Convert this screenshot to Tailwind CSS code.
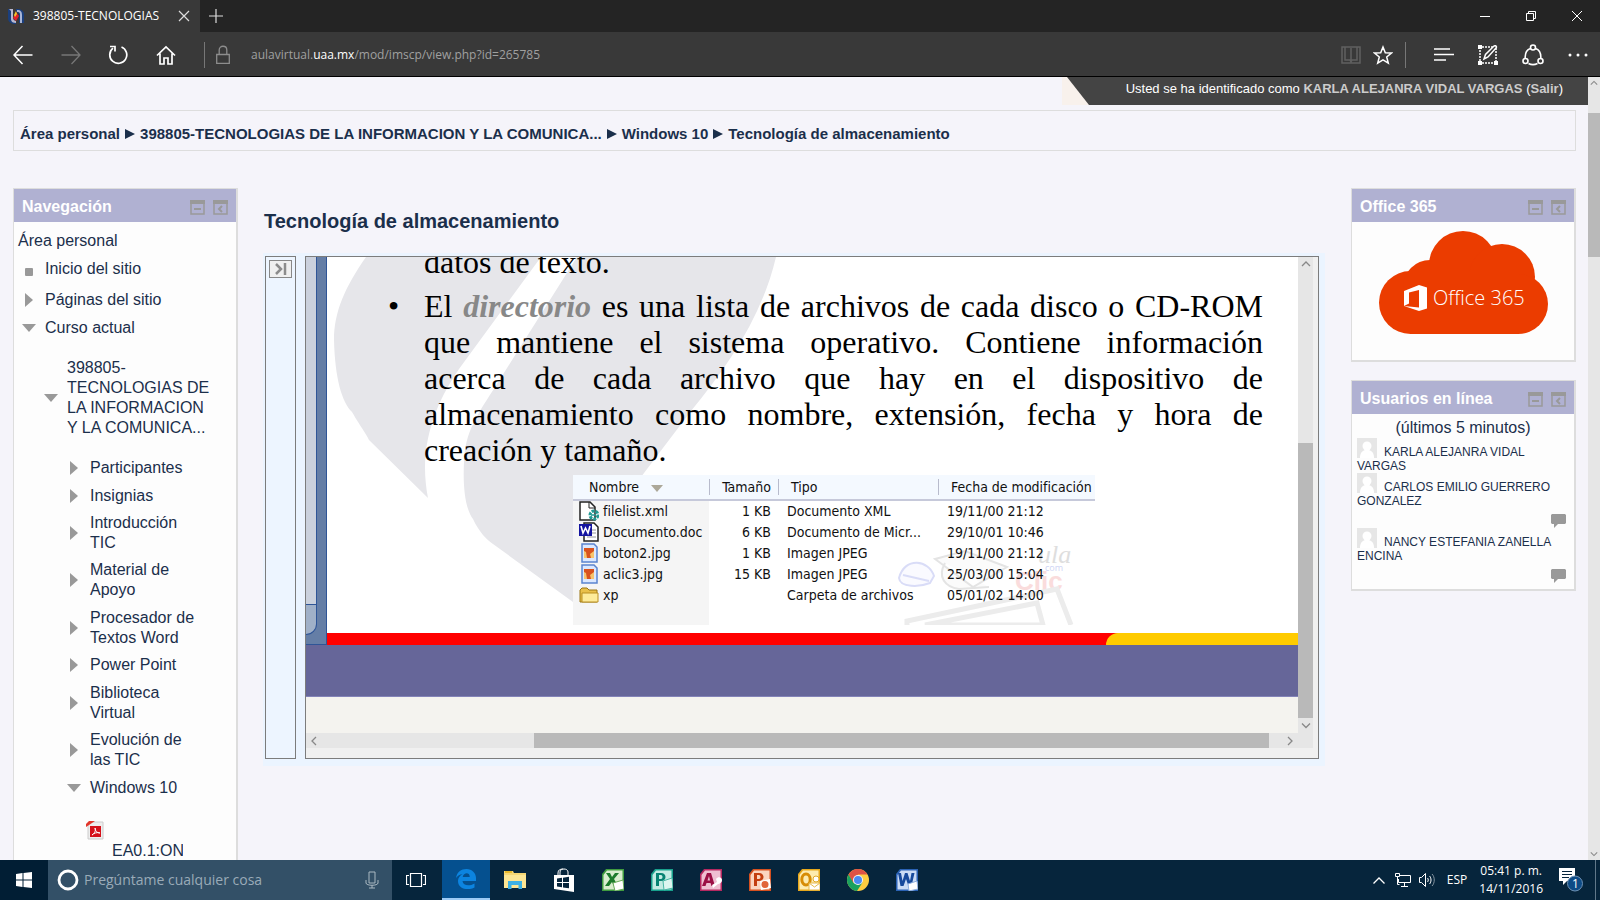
<!DOCTYPE html>
<html lang="es">
<head>
  <meta charset="UTF-8" />
  <meta name="viewport" content="width=device-width, initial-scale=1.0"/>
  <title>398805-TECNOLOGIAS</title>
  <script src="https://cdn.jsdelivr.net/npm/@tailwindcss/browser@4"></script>
</head>
<body class="h-screen flex flex-col overflow-hidden bg-[#f5f4fa] font-['Liberation_Sans',sans-serif] text-base leading-5 text-[#1b2f4b]">

  <!-- Shared icons -->
  <svg class="hidden">
    <symbol id="minus" viewBox="0 0 15 15"><path d="M1 1h13v13H1z" fill="none" stroke="#999" stroke-width="1.5"/><path d="M0 0h15v4H0zM4 8h7v2H4z" fill="#999"/></symbol>
    <symbol id="dock" viewBox="0 0 15 15"><path d="M1 1h13v13H1z" fill="none" stroke="#999" stroke-width="1.5"/><path d="M0 0h15v4H0z" fill="#999"/><path d="M9 6L6 9l3 3" fill="none" stroke="#999" stroke-width="2"/></symbol>
    <symbol id="closed" viewBox="0 0 14 14"><path d="M3 0l8 7-8 7z" fill="#999"/></symbol>
    <symbol id="open" viewBox="0 0 14 14"><path d="M0 3h14l-7 8z" fill="#999"/></symbol>
    <symbol id="dot" viewBox="0 0 14 14"><rect x="3" y="6" width="8" height="8" rx="1" fill="#999"/></symbol>
    <symbol id="avatar" viewBox="0 0 20 20"><path d="M0 0h20v20H0z" fill="#e6e6e6"/><circle cx="10" cy="8" r="4.5" fill="#fff"/><path d="M3 20c0-5 2-7 5-8h4c3 1 5 3 5 8z" fill="#fff"/></symbol>
    <symbol id="bubble" viewBox="0 0 15 14"><path d="M1 0h13l1 1v8l-1 1H7l-4 4v-4H1L0 9V1z" fill="#999"/></symbol>
    <symbol id="jpg" viewBox="0 0 20 20"><path d="M3 1h12l3 3v15H3z" fill="#dbe8ff" stroke="#5b84cf" stroke-width="1.5"/><path d="M5 5h10v10H5z" fill="#f7c46c"/><path d="M5 5h10v3l-4 3 1 4H8L7 9 5 8z" fill="#d9531e"/></symbol>
    <symbol id="chev" viewBox="0 0 10 6"><path d="M1 5l4-4 4 4" fill="none" stroke="#888" stroke-width="1.3"/></symbol>
  </svg>

  <!-- Tabs -->
  <header class="shrink-0 font-['Open_Sans',sans-serif]">
    <div class="flex h-8 bg-[#242424] text-white">
      <div class="flex w-[200px] items-center bg-[#393939] pl-2 text-xs">
        <svg class="mr-[9px] size-4" viewBox="0 0 16 16"><path d="M0 1h5v9c0 3 3 3 3 3v3c-5 0-8-2-8-6z" fill="#1b3f7d"/><path d="M1 1h4v9c0 2 2 3 3 3v2c-5 0-5-3-5-5V3z" fill="#b9b9d0"/><path d="M8 1c5 0 8 1 8 6v8h-5V7c0-3-3-3-3-3z" fill="#1b3f7d"/><path d="M9 2c4 0 5 2 5 5v8h-2V7c0-3-1-3-3-3z" fill="#a9b6d8"/><path d="M8 4l3 4-3 5-3-3z" fill="#e0202c"/><path d="M8 3l1 3-2 3-1-2z" fill="#f5c52b"/></svg>
        <span class="flex-1 whitespace-nowrap">398805-TECNOLOGIAS</span>
        <button class="mr-[10px]" aria-label="Cerrar pestaña"><svg class="size-3" viewBox="0 0 12 12"><path d="M1 1l10 10M11 1L1 11" stroke="#ddd" stroke-width="1.2"/></svg></button>
      </div>
      <button class="px-[9px]" aria-label="Nueva pestaña"><svg class="size-[14px]" viewBox="0 0 14 14"><path d="M7 0v14M0 7h14" stroke="#ddd" stroke-width="1.2"/></svg></button>
      <div class="ml-auto flex">
        <button class="flex w-[46px] items-center justify-center" aria-label="Minimizar"><svg class="size-[10px]" viewBox="0 0 10 10"><path d="M0 5.5h10" stroke="#fff"/></svg></button>
        <button class="flex w-[46px] items-center justify-center" aria-label="Restaurar"><svg class="size-[10px]" viewBox="0 0 10 10"><path d="M.5 2.5h7v7h-7zM2.500 2V.5h7v7H8" fill="none" stroke="#fff"/></svg></button>
        <button class="flex w-[46px] items-center justify-center" aria-label="Cerrar"><svg class="size-[10px]" viewBox="0 0 10 10"><path d="M0 0l10 10M10 0L0 10" stroke="#fff"/></svg></button>
      </div>
    </div>

    <!-- Address bar -->
    <div class="flex h-[45px] items-center border-b border-black bg-[#393939] pl-[13px] pr-3 pt-px">
      <button aria-label="Atrás"><svg class="size-5" viewBox="0 0 20 20"><path d="M19.500 10H1M9.500 1L1 10l8.500 9" fill="none" stroke="#fff" stroke-width="1.5"/></svg></button>
      <button class="ml-7" aria-label="Adelante"><svg class="size-5" viewBox="0 0 20 20"><path d="M.5 10H19M10.500 1L19 10l-8.500 9" fill="none" stroke="#777" stroke-width="1.3"/></svg></button>
      <button class="ml-[27px]" aria-label="Actualizar"><svg class="size-5" viewBox="0 0 20 20"><path d="M13.500 2A8.500 8.500 0 1 1 5 3.200" fill="none" stroke="#fff" stroke-width="1.7"/><path d="M2 1.500h5v5" fill="none" stroke="#fff" stroke-width="1.700"/></svg></button>
      <button class="ml-7" aria-label="Inicio"><svg class="size-5" viewBox="0 0 20 20"><path d="M1 10.500L10 2l9 8.500M4 8.500V19h4v-6h4v6h4V8.500" fill="none" stroke="#fff" stroke-width="1.700"/></svg></button>
      <span class="ml-7 h-[26px] w-px bg-[#777]"></span>
      <svg class="ml-[11px] h-5 w-[14px]" viewBox="0 0 14 20"><path d="M.7 9.500h12.600v8.800H.7zM3.200 9.500V5c0-5 7.600-5 7.600 0v4.500" fill="none" stroke="#8d8d8d" stroke-width="1.300"/></svg>
      <button class="ml-[21px] flex-1 text-left text-xs text-[#a0a0a0]">aulavirtual.<span class="text-white">uaa.mx</span>/mod/imscp/view.php?id=265785</button>
      <button aria-label="Vista de lectura"><svg class="h-5 w-5" viewBox="0 0 20 20"><path d="M1 2h18v16H1zM4 2v13h5l1 2 1-2h5V2M10 3v14" fill="none" stroke="#606060" stroke-width="1.500"/></svg></button>
      <button class="ml-3" aria-label="Favoritos"><svg class="size-5" viewBox="0 0 20 20"><path d="M10 2l2.300 5.700 6.200.3-4.800 4 1.600 6.200L10 14.800l-5.300 3.400L6.300 12 1.500 8l6.200-.3z" fill="none" stroke="#fff" stroke-width="1.500"/></svg></button>
      <span class="ml-3 h-[26px] w-px bg-[#777]"></span>
      <button class="ml-7" aria-label="Centro"><svg class="size-5" viewBox="0 0 20 20"><path d="M0 4h16M0 9.500h20M0 15h12" stroke="#fff" stroke-width="1.400"/></svg></button>
      <button class="ml-6" aria-label="Nota web"><svg class="size-5" viewBox="0 0 20 20"><path d="M2 2v16h16V2z" fill="none" stroke="#fff" stroke-width="1.500" stroke-dasharray="2 1"/><path d="M0 0h4v4H0zM0 16h4v4H0zM16 16h4v4h-4z" fill="#fff"/><path d="M6 14l1.500-4.500L16 1c2-1 3 1 2 2l-8 9z" fill="#393939" stroke="#fff" stroke-width="1.500"/></svg></button>
      <button class="ml-6" aria-label="Compartir"><svg class="size-[22px]" viewBox="0 0 22 22"><path d="M8.500 4.500C4 6 3 10 3.200 14M13.500 4.500c4.500 1.500 5.500 5.500 5.300 9.500M6.500 19.500c3 1.500 6 1.500 9 0" fill="none" stroke="#fff" stroke-width="1.600"/><g fill="none" stroke="#fff" stroke-width="1.600"><circle cx="11" cy="3.500" r="2.500"/><circle cx="3.500" cy="17" r="2.500"/><circle cx="18.500" cy="17" r="2.500"/></g></svg></button>
      <button class="ml-6" aria-label="Más"><svg class="h-1 w-5" viewBox="0 0 20 4"><circle cx="2" cy="2" r="1.500" fill="#fff"/><circle cx="10" cy="2" r="1.500" fill="#fff"/><circle cx="18" cy="2" r="1.500" fill="#fff"/></svg></button>
    </div>
  </header>

  <!-- Page -->
  <div class="flex min-h-0 flex-1">
    <div class="min-w-0 flex-1 overflow-hidden">
      <div class="flex justify-end">
        <svg class="h-7 w-[28px]" viewBox="0 0 28 28"><path d="M0 0h28v28H0z" fill="#f8f1ec"/><path d="M5 0h23v28h-1z" fill="#444"/></svg>
        <p class="h-7 bg-[#444] pl-9 pr-[25px] text-[13px] leading-6 text-white">Usted se ha identificado como <a href="#" class="font-bold text-[#ccc]">KARLA ALEJANRA VIDAL VARGAS</a> (<a href="#" class="font-bold text-[#ccc]">Salir</a>)</p>
      </div>

      <nav class="ml-[13px] mr-3 mt-[5px] flex h-[41px] items-center gap-[5px] border border-[#ddd] pl-[6px] pt-[6px] text-[15px] font-bold" aria-label="Ruta">
        <a href="#">Área personal</a>
        <svg class="h-[10px] w-[10px]" viewBox="0 0 10 10"><path d="M0 0l10 5-10 5z" fill="#1b2f4b"/></svg>
        <a href="#">398805-TECNOLOGIAS DE LA INFORMACION Y LA COMUNICA...</a>
        <svg class="h-[10px] w-[10px]" viewBox="0 0 10 10"><path d="M0 0l10 5-10 5z" fill="#1b2f4b"/></svg>
        <a href="#">Windows 10</a>
        <svg class="h-[10px] w-[10px]" viewBox="0 0 10 10"><path d="M0 0l10 5-10 5z" fill="#1b2f4b"/></svg>
        <a href="#">Tecnología de almacenamiento</a>
      </nav>

      <div class="ml-[13px] mr-3 mt-[37px] flex items-start">
        <!-- Navegación -->
        <aside class="w-[225px] shrink-0 border-2 border-l border-t border-[#ddd] bg-[#fdfdfd] pb-10">
          <div class="flex h-[33px] items-center gap-2 bg-[#b0b1d2] pl-2 pr-2 pt-[3px] font-bold text-white">
            <h2 class="flex-1">Navegación</h2>
            <button aria-label="Ocultar bloque"><svg class="size-[15px]"><use href="#minus"/></svg></button>
            <button aria-label="Acoplar bloque"><svg class="size-[15px]"><use href="#dock"/></svg></button>
          </div>
          <div class="pl-1 pt-[9px]">
            <a href="#">Área personal</a>
            <ul class="mt-2 pl-1">
              <li class="flex items-center gap-[9px]"><svg class="size-[14px]"><use href="#dot"/></svg><a href="#">Inicio del sitio</a></li>
              <li class="mt-[11px] flex items-center gap-[9px]"><svg class="size-[14px]"><use href="#closed"/></svg><a href="#">Páginas del sitio</a></li>
              <li class="mt-2 flex items-center gap-[9px]"><svg class="size-[14px]"><use href="#open"/></svg><span>Curso actual</span></li>
            </ul>
            <div class="mt-5 flex items-center gap-[9px] pl-[26px] pr-5"><svg class="size-[14px] shrink-0"><use href="#open"/></svg><a href="#">398805-TECNOLOGIAS DE LA INFORMACION Y LA COMUNICA...</a></div>
            <ul class="mt-5 pl-[49px] pr-[35px]">
              <li class="mb-2 flex items-center gap-[9px]"><svg class="size-[14px] shrink-0"><use href="#closed"/></svg><span>Participantes</span></li>
              <li class="mb-[7px] flex items-center gap-[9px]"><svg class="size-[14px] shrink-0"><use href="#closed"/></svg><span>Insignias</span></li>
              <li class="mb-[7px] flex items-center gap-[9px]"><svg class="size-[14px] shrink-0"><use href="#closed"/></svg><span>Introducción TIC</span></li>
              <li class="mb-2 flex items-center gap-[9px]"><svg class="size-[14px] shrink-0"><use href="#closed"/></svg><span>Material de Apoyo</span></li>
              <li class="mb-[7px] flex items-center gap-[9px]"><svg class="size-[14px] shrink-0"><use href="#closed"/></svg><span>Procesador de Textos Word</span></li>
              <li class="mb-2 flex items-center gap-[9px]"><svg class="size-[14px] shrink-0"><use href="#closed"/></svg><span>Power Point</span></li>
              <li class="mb-[7px] flex items-center gap-[9px]"><svg class="size-[14px] shrink-0"><use href="#closed"/></svg><span>Biblioteca Virtual</span></li>
              <li class="mb-2 flex items-center gap-[9px]"><svg class="size-[14px] shrink-0"><use href="#closed"/></svg><span>Evolución de las TIC</span></li>
              <li class="flex items-center gap-[9px]"><svg class="size-[14px] shrink-0"><use href="#open"/></svg><span>Windows 10</span></li>
            </ul>
            <div class="pl-[68px] pt-[23px]">
              <svg class="h-5 w-[18px]" viewBox="0 0 18 20"><path d="M3 1h14v17H2V5z" fill="#eee" stroke="#ccc"/><path d="M0 6V3l3-3h6z" fill="#e2362b"/><path d="M4 5h11v11H4z" fill="#d5121b"/><path d="M6 14c3-2 4-5 3-7 0 3 2 5 5 5-3-1-6 0-8 2z" fill="none" stroke="#fff"/></svg>
              <a href="#" class="ml-[26px] block w-[71px] overflow-hidden whitespace-nowrap">EA0.1:ONLINE</a>
            </div>
          </div>
        </aside>

        <!-- Contenido -->
        <main class="mr-[26px] ml-[25px] min-w-0 flex-1">
          <h1 class="mt-[21px] pl-px text-xl leading-6 font-bold">Tecnología de almacenamiento</h1>
          <div class="mt-5 flex gap-[9px] bg-[#ebf4ff] pt-[3px] pr-[6px] pb-[7px] pl-[2px]">
            <div class="w-[31px] shrink-0 border border-[#7c7c7c] bg-[#edf5ff] p-[3px]">
              <button class="flex h-[18px] w-full items-center justify-center border border-[#888] bg-[#f0f0f0]" aria-label="Mostrar índice"><svg class="h-3 w-[14px]" viewBox="0 0 14 12"><path d="M2 1l5 5-5 5M11 0v12" fill="none" stroke="#8c8c8c" stroke-width="2.500"/></svg></button>
            </div>

            <div class="min-w-0 flex-1 border border-[#7c7c7c] bg-[#f0f0f0] pb-[10px]">
              <div class="flex pr-[5px]">
                <!-- Diapositiva -->
                <div class="min-w-0 flex-1 overflow-hidden bg-[#f4f3ef] pb-9">
                  <div class="flex bg-white">
                    <div class="flex w-[21px] shrink-0 border-r border-b border-[#2f5597] bg-[#657ea6]">
                      <div class="flex w-[11px] flex-col pb-[9px]">
                        <div class="flex-1 border-r border-b border-[#2f5597] bg-[#cbd1dd]"></div>
                        <div class="h-[30px] rounded-br-[16px] border-r border-b border-[#2f5597] bg-[#a0b0c8]"></div>
                      </div>
                    </div>
                    <div class="relative min-w-0 flex-1">
                      <svg class="absolute top-0 left-0 h-[376px] w-[480px]" viewBox="20 0 480 376">
                        <path d="M59 0C38 30 27 55 27 83C28 122 35 145 45 155C55 172 60 178 62 183L121 241C116 215 117 190 126 163C132 145 140 130 152 112L234 0z" fill="#e6e6ea"/>
                        <path d="M270 0L190 127C170 158 158 175 157 205C156 225 157 250 166 262C172 275 180 283 186 287L266 345H300L334 220L384 154C420 110 455 60 469 0z" fill="#e6e6ea"/>
                      </svg>
                      <div class="relative">
                        <div class="-mt-[13px] pr-[35px] pl-[97px] font-['Liberation_Serif',serif] text-[32px] leading-9 text-black">
                          <p>datos de texto.</p>
                          <div class="relative mt-2">
                            <span class="absolute top-0 -left-9">•</span>
                            <p class="text-justify [text-align-last:justify]">El <em class="font-bold text-[#888]">directorio</em> es una lista de archivos de cada disco o CD-ROM<br>que mantiene el sistema operativo. Contiene información<br>acerca de cada archivo que hay en el dispositivo de<br>almacenamiento como nombre, extensión, fecha y hora de</p>
                            <p>creación y tamaño.</p>
                          </div>
                        </div>
                        <div class="relative mt-[7px] ml-[246px] w-[522px] bg-[linear-gradient(90deg,#f5f5f5_136px,#fff_136px)] pb-[19px]">
                          <svg class="absolute right-0 bottom-0 h-[96px] w-[200px]" viewBox="0 0 200 96">
                            <path d="M4 49c6-22 30-18 35-2l-4 7c-10 4-30 5-31-5zM8 46l26 6" fill="#fafaff" stroke="#d9dcf7" stroke-width="2"/>
                            <path d="M40 30l30-8 42 16-34 20zM50 34c-8 14 0 24 14 26l30-2" fill="#fbfbfb" stroke="#e4e4e4" stroke-width="2"/>
                            <text x="143" y="34" font-family="Liberation Serif, serif" font-style="italic" font-size="26" fill="#dedede">ula</text>
                            <text x="150" y="42" font-family="Open Sans, sans-serif" font-size="9" fill="#cfd5f5">com</text>
                            <text x="120" y="61" font-family="Liberation Sans, sans-serif" font-weight="bold" font-size="26" fill="#fadcdc">Clic</text>
                            <path d="M12 96v-4l150-32 14 36M30 96l112-22 6 22z" fill="none" stroke="#ececec" stroke-width="5"/>
                          </svg>
                          <table class="relative w-full table-fixed font-['DejaVu_Sans_Condensed','DejaVu_Sans',sans-serif] text-sm leading-[21px] text-[#111] whitespace-nowrap">
                            <colgroup><col class="w-[134px]"><col class="w-[71px]"><col class="w-[160px]"><col></colgroup>
                            <thead class="border-b-2 border-[#c6c9da] bg-[#f4f9ff] leading-6">
                              <tr class="text-left">
                                <th class="pl-4 font-normal">Nombre <svg class="ml-2 inline h-[7px] w-3" viewBox="0 0 12 7"><path d="M0 0h12L6 7z" fill="#aca899"/></svg></th>
                                <th class="pr-[7px] text-right font-normal"><span class="inline-block border-l border-[#b8bbcc] pl-3 leading-[16px]">Tamaño</span></th>
                                <th class="font-normal"><span class="inline-block border-l border-[#b8bbcc] pl-3 leading-[16px]">Tipo</span></th>
                                <th class="font-normal"><span class="inline-block border-l border-[#b8bbcc] pl-3 leading-[16px]">Fecha de modificación</span></th>
                              </tr>
                            </thead>
                            <tbody>
                              <tr>
                                <td class="pl-[6px]"><div class="flex gap-1"><svg class="size-5 shrink-0" viewBox="0 0 20 20"><path d="M1 1h10l5 5v13H1z" fill="#fff" stroke="#222" stroke-width="1.500"/><path d="M10 1v6h6" fill="none" stroke="#222"/><circle cx="15" cy="14" r="4" fill="none" stroke="#219a94" stroke-width="3" stroke-dasharray="3 1"/><path d="M12 14h5" stroke="#219a94" stroke-width="1.500"/></svg>filelist.xml</div></td>
                                <td class="pr-[7px] text-right">1 KB</td><td class="pl-[9px]">Documento XML</td><td class="pl-[9px]">19/11/00 21:12</td>
                              </tr>
                              <tr>
                                <td class="pl-[6px]"><div class="flex gap-1"><svg class="size-5 shrink-0" viewBox="0 0 20 20"><path d="M5 1h10l4 4v14H5z" fill="#fff" stroke="#222" stroke-width="1.500"/><path d="M13 8h4M13 11h4M8 15h9" stroke="#999"/><path d="M0 2h13v12H0z" fill="#1414a0"/><path d="M2 4l2 7 2.500-5L9 11l2-7" fill="none" stroke="#fff" stroke-width="1.600"/></svg>Documento.doc</div></td>
                                <td class="pr-[7px] text-right">6 KB</td><td class="pl-[9px]">Documento de Micr...</td><td class="pl-[9px]">29/10/01 10:46</td>
                              </tr>
                              <tr>
                                <td class="pl-[6px]"><div class="flex gap-1"><svg class="size-5 shrink-0"><use href="#jpg"/></svg>boton2.jpg</div></td>
                                <td class="pr-[7px] text-right">1 KB</td><td class="pl-[9px]">Imagen JPEG</td><td class="pl-[9px]">19/11/00 21:12</td>
                              </tr>
                              <tr>
                                <td class="pl-[6px]"><div class="flex gap-1"><svg class="size-5 shrink-0"><use href="#jpg"/></svg>aclic3.jpg</div></td>
                                <td class="pr-[7px] text-right">15 KB</td><td class="pl-[9px]">Imagen JPEG</td><td class="pl-[9px]">25/03/00 15:04</td>
                              </tr>
                              <tr>
                                <td class="pl-[6px]"><div class="flex gap-1"><svg class="size-5 shrink-0" viewBox="0 0 20 20"><path d="M1 5l2-2h5l2 2h8v12H1z" fill="#e9c04a" stroke="#9a7413"/><path d="M3 8h16v9H3z" fill="#fdeb9a" stroke="#b98f22"/></svg>xp</div></td>
                                <td></td><td class="pl-[9px]">Carpeta de archivos</td><td class="pl-[9px]">05/01/02 14:00</td>
                              </tr>
                            </tbody>
                          </table>
                        </div>
                        <div class="mt-2 flex h-3 bg-[#f00]">
                          <div class="ml-auto w-[192px] rounded-tl-[12px] bg-[#ffcb00]"></div>
                        </div>
                      </div>
                    </div>
                  </div>
                  <div class="h-[52px] border-b border-[#8383b8] bg-[#666699]"></div>
                </div>
                <div class="flex w-[15px] shrink-0 flex-col items-center bg-[#e6e6e6]">
                  <svg class="my-1 h-[6px] w-[10px]"><use href="#chev"/></svg>
                  <div class="mt-auto h-[275px] w-full bg-[#b9b9b9]"></div>
                  <svg class="my-1 h-[7px] w-[10px] rotate-180"><use href="#chev"/></svg>
                </div>
              </div>
              <div class="mr-[5px] flex h-[15px] items-center bg-[#e6e6e6]">
                <svg class="mx-[3px] h-[6px] w-[10px] -rotate-90"><use href="#chev"/></svg>
                <div class="ml-auto h-full w-[73%] bg-[#b9b9b9]"></div>
                <svg class="mr-[18px] ml-4 h-[6px] w-[10px] rotate-90"><use href="#chev"/></svg>
              </div>
            </div>
          </div>
        </main>

        <!-- Bloques derechos -->
        <aside class="w-[225px] shrink-0">
          <section class="border-2 border-l border-t border-[#ddd] bg-[#fdfdfd] pb-[25px]">
            <div class="flex h-[33px] items-center gap-2 bg-[#b0b1d2] pl-2 pr-2 pt-[3px] font-bold text-white">
              <h2 class="flex-1">Office 365</h2>
              <button aria-label="Ocultar bloque"><svg class="size-[15px]"><use href="#minus"/></svg></button>
              <button aria-label="Acoplar bloque"><svg class="size-[15px]"><use href="#dock"/></svg></button>
            </div>
            <a href="#"><svg class="mx-auto mt-[9px] block h-[104px] w-[169px]" viewBox="0 0 169 104">
              <g fill="#eb3c00"><circle cx="31.500" cy="71.500" r="31.500"/><circle cx="51" cy="56" r="27"/><circle cx="84" cy="34" r="34"/><circle cx="123" cy="46" r="33"/><circle cx="139" cy="73" r="30"/><path d="M31 40h108v63H31z"/></g>
              <path d="M25 60l15-6 8 2.500v21L40 80l-15-5 15 1.500V59l-10 2.500v11L25 75z" fill="#fff"/>
              <text x="54" y="74" font-family="Open Sans, sans-serif" font-weight="300" font-size="20" fill="#fff">Office 365</text>
            </svg></a>
          </section>

          <section class="mt-[18px] border-2 border-l border-t border-[#ddd] bg-[#fdfdfd] pb-[6px]">
            <div class="flex h-[33px] items-center gap-2 bg-[#b0b1d2] pl-2 pr-2 pt-[3px] font-bold text-white">
              <h2 class="flex-1">Usuarios en línea</h2>
              <button aria-label="Ocultar bloque"><svg class="size-[15px]"><use href="#minus"/></svg></button>
              <button aria-label="Acoplar bloque"><svg class="size-[15px]"><use href="#dock"/></svg></button>
            </div>
            <p class="pt-1 text-center">(últimos 5 minutos)</p>
            <ul class="pl-[5px] pr-2 text-xs leading-[14px]">
              <li><a href="#"><svg class="mr-[7px] inline size-5 align-[-2px]"><use href="#avatar"/></svg>KARLA ALEJANRA VIDAL VARGAS</a></li>
              <li><a href="#"><svg class="mr-[7px] inline size-5 align-[-2px]"><use href="#avatar"/></svg>CARLOS EMILIO GUERRERO GONZALEZ</a>
                <button class="mt-[6px] ml-auto block" aria-label="Mensaje"><svg class="h-[14px] w-[15px]"><use href="#bubble"/></svg></button></li>
              <li><a href="#"><svg class="mr-[7px] inline size-5 align-[-2px]"><use href="#avatar"/></svg>NANCY ESTEFANIA ZANELLA ENCINA</a>
                <button class="mt-[6px] ml-auto block" aria-label="Mensaje"><svg class="h-[14px] w-[15px]"><use href="#bubble"/></svg></button></li>
            </ul>
          </section>
        </aside>
      </div>
    </div>

    <div class="flex w-3 shrink-0 flex-col items-center bg-[#e6e6e6]">
      <svg class="mt-[3px] h-[6px] w-2"><use href="#chev"/></svg>
      <div class="mt-[27px] h-[144px] w-full bg-[#b9b9b9]"></div>
      <svg class="mt-auto mb-[3px] h-[6px] w-2 rotate-180"><use href="#chev"/></svg>
    </div>
  </div>

  <!-- Taskbar -->
  <footer class="flex h-10 shrink-0 bg-[#06253c] font-['Open_Sans',sans-serif] text-xs text-white">
    <button class="flex w-12 items-center justify-center bg-[#011e34]" aria-label="Inicio"><svg class="size-4" viewBox="0 0 16 16"><path d="M0 2l6.500-1v6.500H0zM7.500 1L16 0v7.500H7.500zM0 8.500h6.500V15L0 14zM7.500 8.500H16V16l-8.500-1z" fill="#fff"/></svg></button>
    <label class="flex w-[344px] items-center bg-[#335067] pl-[9px] pr-3">
      <svg class="size-[22px]" viewBox="0 0 22 22"><circle cx="11" cy="11" r="9" fill="none" stroke="#fff" stroke-width="2.800"/></svg>
      <input type="text" placeholder="Pregúntame cualquier cosa" class="ml-[5px] min-w-0 flex-1 bg-transparent text-sm outline-none placeholder:text-[#9aabb8]" />
      <svg class="h-[18px] w-4" viewBox="0 0 16 18"><path d="M5 1h6v11H5zM2 9v3c0 3 12 3 12 0V9M8 14v3M5 17h6" fill="none" stroke="#aab8c2"/></svg>
    </label>
    <button class="mr-[2px] flex w-12 items-center justify-center" aria-label="Vista de tareas"><svg class="h-4 w-5" viewBox="0 0 20 16"><path d="M4.500 1.500h11v13h-11zM3 3.500H.5v9H3M17 3.500h2.500v9H17" fill="none" stroke="#fff" stroke-width="1.200"/></svg></button>
    <div class="flex gap-px">
      <button class="flex w-12 items-center justify-center border-b-2 border-[#9ccaf5] bg-[#05508f]" aria-label="Edge"><svg class="size-5" viewBox="0 0 20 20"><path d="M0 9C1 3 5 0 10.500 0 16 0 20 4 20 9v3H6.500c.5 5 7 5.500 12 2.500V18.500C12 22 2 20 2 12c0-3 2-5.500 4.500-7C4 5.500 1.500 6.500 0 9zM6.700 8h7c.3-5-6-5-7 0z" fill="#0c84e0" fill-rule="evenodd"/></svg></button>
      <button class="flex w-12 items-center justify-center" aria-label="Explorador"><svg class="h-5 w-[22px]" viewBox="0 0 22 20"><path d="M0 1h9l1 2h12v15H0z" fill="#f6d774"/><path d="M0 5h22v13H0z" fill="#fde694"/><path d="M1 1h7v2H1z" fill="#e9b92c"/><path d="M4 19v-8h14v8h-3.500v-4h-7v4z" fill="#3cb1e5"/></svg></button>
      <button class="flex w-12 items-center justify-center" aria-label="Tienda"><svg class="h-6 w-[22px]" viewBox="0 0 22 24"><path d="M7 8V4c0-4 8-4 8 0v3M5 8V5c0-3 2-4 5-4" fill="none" stroke="#fff"/><path d="M1 7h20v17L1 21z" fill="#fff"/><path d="M4 10.500l5-.7V14H4zM10 9.700l6-.9V14h-6zM4 15h5v4.200l-5-.7zM10 15h6v5.200l-6-.8z" fill="#06253c"/></svg></button>
      <button class="flex w-12 items-center justify-center" aria-label="Excel"><svg class="size-[22px]" viewBox="0 0 22 22"><path d="M4 0h18v22H0V5z" fill="#3f9b3f"/><path d="M5 1.500h15.500v19h-19V6z" fill="#d9edcf"/><path d="M4 4h4l2 4 3-4h4l-5 6 4 7h-4l-2-4-3 4H3l5-7z" fill="#1d7b2c"/><path d="M11 14l10-3 1 9-9 2z" fill="#fff" stroke="#68ab5b"/></svg></button>
      <button class="flex w-12 items-center justify-center" aria-label="Publisher"><svg class="size-[22px]" viewBox="0 0 22 22"><path d="M4 0h18v22H0V5z" fill="#18a08c"/><path d="M5 1.500h15.500v19h-19V6z" fill="#c4ebe3"/><path d="M5 17V4h5c6 0 6 8 0 8H8v5zM8 6v4h2c2 0 2-4 0-4z" fill="#078272" fill-rule="evenodd"/><path d="M12 12l9-3 1 10-9 2z" fill="#def6f0" stroke="#4ab7a5"/></svg></button>
      <button class="flex w-12 items-center justify-center" aria-label="Access"><svg class="size-[22px]" viewBox="0 0 22 22"><path d="M4 0h18v22H0V5z" fill="#b52860"/><path d="M5 1.500h15.500v19h-19V6z" fill="#efbfd2"/><path d="M2 17L7 4h4l4 13h-3.500l-1-3h-4l-1 3zM7.500 11.500h2.500L9 7z" fill="#9b0f45" fill-rule="evenodd"/><path d="M12 16l5-3-1-3c2-3 6-2 6 1s-3 4-4 4l-5 4z" fill="#fff"/></svg></button>
      <button class="flex w-12 items-center justify-center" aria-label="PowerPoint"><svg class="size-[22px]" viewBox="0 0 22 22"><path d="M4 0h18v22H0V5z" fill="#d5501f"/><path d="M5 1.500h15.500v19h-19V6z" fill="#fbd5c0"/><path d="M5 17V4h5c6 0 6 8 0 8H8v5zM8 6v4h2c2 0 2-4 0-4z" fill="#c43e10" fill-rule="evenodd"/><path d="M11 12l10-2 1 9-10 2z" fill="#fff"/><circle cx="16" cy="15.500" r="3.500" fill="#e1653a"/></svg></button>
      <button class="flex w-12 items-center justify-center" aria-label="Outlook"><svg class="size-[22px]" viewBox="0 0 22 22"><path d="M4 0h18v22H0V5z" fill="#e6a71b"/><path d="M5 1.500h15.500v19h-19V6z" fill="#fdebb0"/><ellipse cx="8" cy="10.500" rx="4.200" ry="5.500" fill="none" stroke="#d78c05" stroke-width="3"/><path d="M11 14h11v7H11z" fill="#fff" stroke="#e6b94a"/><path d="M11 14l5.500 4 5.500-4" fill="none" stroke="#e6b94a"/><circle cx="18" cy="10" r="3" fill="#fff" stroke="#e0a92a"/></svg></button>
      <button class="flex w-12 items-center justify-center" aria-label="Chrome"><svg class="size-[22px]" viewBox="0 0 22 22"><circle cx="11" cy="11" r="11" fill="#ffcd40"/><path d="M1.500 5.500A11 11 0 0 1 20.500 5.500H11L6 14z" fill="#de5246"/><path d="M1.500 5.500A11 11 0 0 0 10 22l5.500-8.500L6.500 14z" fill="#1aa15f"/><circle cx="11" cy="11" r="5" fill="#f4f4f4"/><circle cx="11" cy="11" r="4" fill="#4a8af4"/></svg></button>
      <button class="flex w-12 items-center justify-center" aria-label="Word"><svg class="size-[22px]" viewBox="0 0 22 22"><path d="M4 0h18v22H0V5z" fill="#2a62b4"/><path d="M5 1.500h15.500v19h-19V6z" fill="#cbdcf5"/><path d="M2 4h3l1.500 8L9 4h2.500L14 12l1.500-8h3L15.500 17H12.500L10 10l-2.500 7H4.500z" fill="#174a9c"/><path d="M12 15l9-3 1 8-9 2z" fill="#fff" stroke="#8eafdf"/></svg></button>
    </div>

    <div class="ml-auto flex items-center">
      <button aria-label="Mostrar iconos ocultos"><svg class="h-[7px] w-3" viewBox="0 0 12 7"><path d="M.5 6.500L6 1l5.500 5.500" fill="none" stroke="#fff" stroke-width="1.300"/></svg></button>
      <svg class="ml-[10px] h-[14px] w-4" viewBox="0 0 16 14"><path d="M5 2.500h10.500v7H3.500V6M9.500 10v3M6 13.500h7M.5.500h4v3h-4zM2.500 4v7.500h2" fill="none" stroke="#fff"/></svg>
      <svg class="ml-2 h-[14px] w-4" viewBox="0 0 16 14"><path d="M.5 4.500h2l4-4v13l-4-4h-2zM8.500 5c1 1 1 3 0 4M10.500 3c2 2 2 6 0 8" fill="none" stroke="#fff"/><path d="M13 1c3 3 3 9 0 12" fill="none" stroke="#8796a2"/></svg>
      <span class="ml-3">ESP</span>
      <div class="ml-3 text-center leading-[18px]"><p>05:41 p. m.</p><p>14/11/2016</p></div>
      <button class="ml-4" aria-label="Centro de actividades"><svg class="h-6 w-6" viewBox="0 0 24 24"><path d="M0 0h16v13H8l-4 4v-4H0z" fill="#fff"/><path d="M3 3.500h10M3 6.500h10M3 9.500h7" stroke="#06253c"/><circle cx="16" cy="15.500" r="7.500" fill="#0d4b86" stroke="#6f93b5"/><text x="13" y="20" font-family="Open Sans, sans-serif" font-size="12" fill="#fff">1</text></svg></button>
      <span class="ml-3 mr-1 h-10 w-px bg-[#60788a]"></span>
    </div>
  </footer>
</body>
</html>
